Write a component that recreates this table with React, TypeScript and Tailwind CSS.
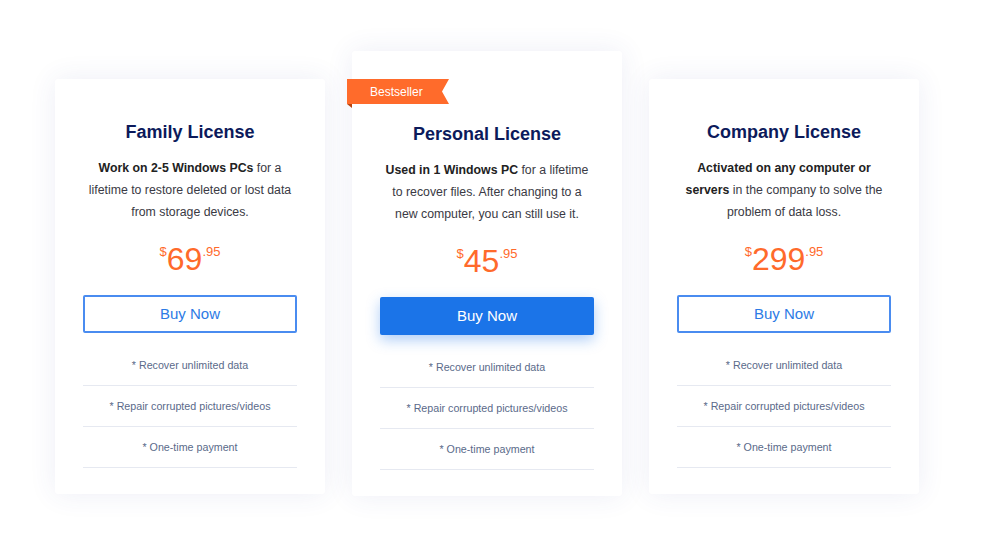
import React from "react";

type Plan = {
  name: string;
  bold: string;
  rest: string;
  dollars: string;
  featured?: boolean;
};

const plans: Plan[] = [
  {
    name: "Family License",
    bold: "Work on 2-5 Windows PCs",
    rest: " for a lifetime to restore deleted or lost data from storage devices.",
    dollars: "69",
  },
  {
    name: "Personal License",
    bold: "Used in 1 Windows PC",
    rest: " for a lifetime to recover files. After changing to a new computer, you can still use it.",
    dollars: "45",
    featured: true,
  },
  {
    name: "Company License",
    bold: "Activated on any computer or servers",
    rest: " in the company to solve the problem of data loss.",
    dollars: "299",
  },
];

const features = [
  "* Recover unlimited data",
  "* Repair corrupted pictures/videos",
  "* One-time payment",
];

const Ribbon = () => (
  <div className="absolute left-[-5px] top-[28px]">
    <div className="flex h-[25px] w-[102px] items-center bg-[#ff6b2b] pl-[23px] text-[12px] text-white [clip-path:polygon(0_0,100%_0,calc(100%-7px)_50%,100%_100%,0_100%)]">
      Bestseller
    </div>
    <div className="h-[4px] w-[5px] bg-[#b8440f] [clip-path:polygon(0_0,100%_0,100%_100%)]" />
  </div>
);

const PlanCard = ({ plan }: { plan: Plan }) => (
  <div
    className={
      "relative flex w-[270px] flex-col items-center rounded-[3px] bg-white px-[27px] pb-[26px] shadow-[0_0_28px_rgba(50,70,160,0.09)] " +
      (plan.featured ? "pt-[71px]" : "pt-[41px]")
    }
  >
    {plan.featured && <Ribbon />}
    <h2 className="text-[18px] font-bold leading-[24px] text-[#0c1a5b]">{plan.name}</h2>
    <p className="mt-[13px] px-[4px] text-center text-[12.3px] leading-[22px] text-[#3a3a44]">
      <span className="font-bold text-[#222]">{plan.bold}</span>
      {plan.rest}
    </p>
    <div className="mt-[18px] flex h-[36px] items-start text-[#ff6a2b]">
      <span className="mt-[4px] text-[13px] leading-[14px]">$</span>
      <span className="text-[32px] leading-[36px]">{plan.dollars}</span>
      <span className="mt-[4px] text-[13px] leading-[14px]">.95</span>
    </div>
    <button
      className={
        "mt-[18px] h-[38px] w-[214px] rounded-[2px] text-[15px] " +
        (plan.featured
          ? "bg-[#1b74e8] text-white shadow-[0_5px_14px_rgba(27,116,232,0.35)]"
          : "border-2 border-[#4a8cf0] bg-white text-[#2c7be5]")
      }
    >
      Buy Now
    </button>
    <ul className="mt-[12px] w-[214px]">
      {features.map((f) => (
        <li
          key={f}
          className="border-b border-[#e6e9f1] py-[11px] text-center text-[10.7px] leading-[18px] text-[#5a6a8a]"
        >
          {f}
        </li>
      ))}
    </ul>
  </div>
);

export default function App() {
  return (
    <div
      className="h-[540px] w-[1000px] bg-white pl-[55px] pt-[51px]"
      style={{ fontFamily: '"Liberation Sans", Arial, sans-serif' }}
    >
      <div className="flex items-start gap-[27px]">
        {plans.map((p) => (
          <div key={p.name} className={p.featured ? "" : "mt-[28px]"}>
            <PlanCard plan={p} />
          </div>
        ))}
      </div>
    </div>
  );
}
